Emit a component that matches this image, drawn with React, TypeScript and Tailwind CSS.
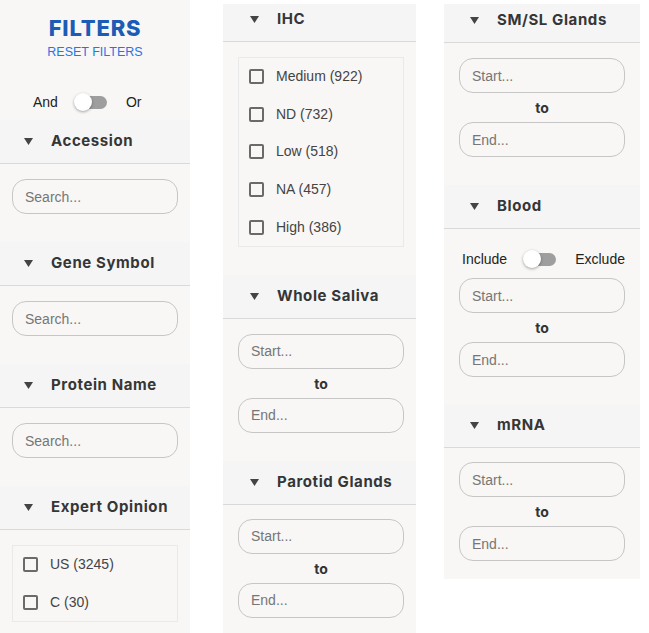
import React from "react";

const head = "font-['Inter','Open_Sans',sans-serif]";
const body = "font-['Liberation_Sans',Arial,sans-serif]";

function Caret() {
  return (
    <svg width="9" height="7" viewBox="0 0 9 7" className="shrink-0">
      <polygon points="0,0 9,0 4.5,7" fill="#444" />
    </svg>
  );
}

function Band({ title, pad, className = "" }: { title: string; pad: string; className?: string }) {
  return (
    <div className={`h-[44px] flex items-center border-b border-[#d9d9d9] bg-[#f5f5f5] ${pad} ${className}`}>
      <Caret />
      <span className={`ml-[18px] text-[15px] font-bold text-[#363636] tracking-[0.6px] ${head}`}>{title}</span>
    </div>
  );
}

function Field({ placeholder }: { placeholder: string }) {
  return (
    <input
      placeholder={placeholder}
      className={`block mx-auto w-[166px] h-[35px] rounded-[14px] border border-[#c6c6c6] bg-transparent px-3 text-[14px] text-[#333] placeholder:text-[#767676] outline-none ${body}`}
    />
  );
}

function Range() {
  return (
    <div>
      <Field placeholder="Start..." />
      <div className={`h-[29px] flex items-center justify-center text-[14px] font-bold text-[#333] ${head}`}>to</div>
      <Field placeholder="End..." />
    </div>
  );
}

function Toggle({ left, right }: { left: string; right: string }) {
  return (
    <div className={`h-[24px] flex items-center text-[14px] text-[#222] ${body}`}>
      <span>{left}</span>
      <div className="relative ml-[16px] w-[33px] h-[18px] flex items-center">
        <div className="absolute left-[3px] right-0 h-[13px] rounded-full bg-[#9e9e9e]" />
        <div className="absolute left-0 w-[18px] h-[18px] rounded-full bg-white shadow-[0_1px_3px_rgba(0,0,0,0.35)]" />
      </div>
      <span className="ml-[19px]">{right}</span>
    </div>
  );
}

function Checks({ items }: { items: string[] }) {
  return (
    <div className="mx-auto w-[166px] border border-[#e9e9e9]">
      {items.map((it) => (
        <label key={it} className={`h-[37.6px] flex items-center pl-[10px] text-[14px] text-[#444] ${body}`}>
          <span className="w-[15px] h-[15px] border-2 border-[#6a6a6a] rounded-[2px]" />
          <span className="ml-[12px]">{it}</span>
        </label>
      ))}
    </div>
  );
}

export default function App() {
  return (
    <div className="flex items-start h-[633px] overflow-hidden bg-white">
      {/* left panel */}
      <div className="w-[190px] h-[633px] bg-[#f8f7f5] overflow-hidden">
        <div className="pt-[14px] text-center">
          <div className={`h-[28px] leading-[28px] text-[22px] font-extrabold text-[#1d5cb6] tracking-[0.8px] ${head}`}>FILTERS</div>
          <div className={`mt-[2px] h-[16px] leading-[16px] text-[12.5px] text-[#2476e6] ${body}`}>RESET FILTERS</div>
        </div>
        <div className="mt-[30px] mb-[6px] pl-[33px]">
          <Toggle left="And" right="Or" />
        </div>
        <Band title="Accession" pad="pl-[24px]" />
        <div className="pt-[15px] pb-[28px]"><Field placeholder="Search..." /></div>
        <Band title="Gene Symbol" pad="pl-[24px]" />
        <div className="pt-[15px] pb-[28px]"><Field placeholder="Search..." /></div>
        <Band title="Protein Name" pad="pl-[24px]" />
        <div className="pt-[15px] pb-[28px]"><Field placeholder="Search..." /></div>
        <Band title="Expert Opinion" pad="pl-[24px]" />
        <div className="pt-[15px]">
          <Checks items={["US (3245)", "C (30)"]} />
        </div>
      </div>

      {/* middle panel */}
      <div className="ml-[33px] mt-[4px] w-[193px] h-[629px] bg-[#f8f7f5] overflow-hidden">
        <Band title="IHC" pad="pl-[27px]" className="-mt-[6px]" />
        <div className="pt-[15px] pb-[28px] pl-[3px]">
          <Checks items={["Medium (922)", "ND (732)", "Low (518)", "NA (457)", "High (386)"]} />
        </div>
        <Band title="Whole Saliva" pad="pl-[27px]" />
        <div className="pt-[15px] pb-[28px] pl-[3px]"><Range /></div>
        <Band title="Parotid Glands" pad="pl-[27px]" />
        <div className="pt-[14px] pl-[3px]"><Range /></div>
      </div>

      {/* right panel */}
      <div className="ml-[28px] mt-[4px] w-[196px] bg-[#f8f7f5] overflow-hidden">
        <Band title="SM/SL Glands" pad="pl-[26px]" className="-mt-[5px]" />
        <div className="pt-[15px] pb-[28px]"><Range /></div>
        <Band title="Blood" pad="pl-[26px]" />
        <div className="pt-[18px] pl-[18px]">
          <Toggle left="Include" right="Exclude" />
        </div>
        <div className="pt-[7px] pb-[27px]"><Range /></div>
        <Band title="mRNA" pad="pl-[26px]" />
        <div className="pt-[14px] pb-[18px]"><Range /></div>
      </div>
    </div>
  );
}
